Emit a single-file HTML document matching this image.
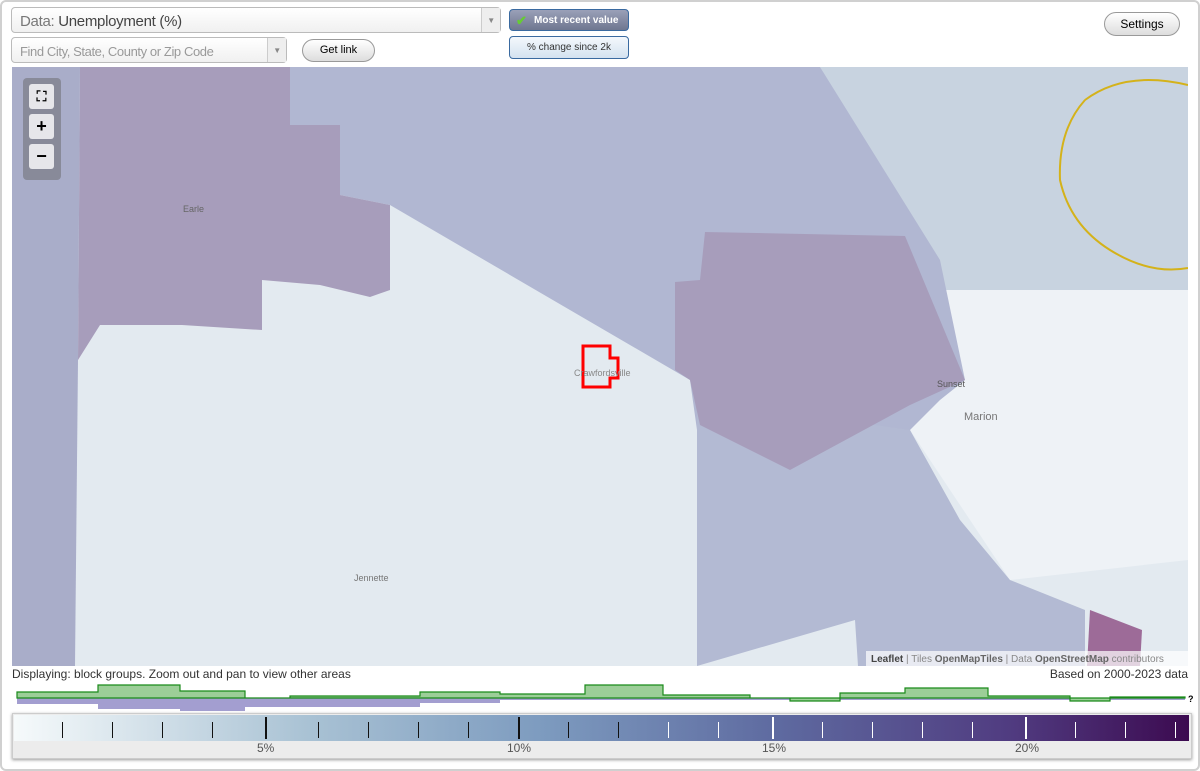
<!DOCTYPE html><html><head><style>
body{margin:0;width:1200px;height:771px;overflow:hidden;font-family:"Liberation Sans",sans-serif;background:#fff}
.frame{position:absolute;left:0;top:0;width:1196px;height:767px;border:2px solid #d0d0d0;border-radius:6px}
.sel{position:absolute;background:linear-gradient(#fff,#f0f0f0);border:1px solid #bbb;border-radius:4px;box-sizing:border-box;font-size:14px;color:#444}
.arrow{position:absolute;right:0;top:0;bottom:0;width:18px;border-left:1px solid #ccc;background:#eee;font-size:8px;color:#888;text-align:center}
.btn{position:absolute;border:1px solid #999;border-radius:12px;background:linear-gradient(#fff,#ddd);font-size:11px;text-align:center;box-sizing:border-box}
.zb{position:absolute;left:29px;width:25px;height:25px;background:#e6e6ea;border-radius:3px;text-align:center;font-weight:bold;font-size:18px;line-height:25px}
.tk{position:absolute;top:722px;width:1px;height:16px;background:#111}
.lb{position:absolute;top:741px;font-size:12px;color:#555}
</style></head><body>
<div class="frame"></div>
<div class="sel" style="left:11px;top:7px;width:490px;height:26px;padding:5px 8px;font-size:15px;letter-spacing:-0.3px"><span style="color:#777">Data:</span> Unemployment (%)<div class="arrow" style="line-height:26px">▼</div></div>
<div class="sel" style="left:11px;top:37px;width:276px;height:26px;padding:6px 8px;font-size:13px;color:#999;letter-spacing:-0.4px">Find City, State, County or Zip Code<div class="arrow" style="line-height:26px">▼</div></div>
<div class="btn" style="left:302px;top:39px;width:73px;height:23px;line-height:21px">Get link</div>
<div style="position:absolute;left:509px;top:9px;width:120px;height:22px;border:1px solid #3a6aa0;border-radius:4px;background:linear-gradient(#9aa0b8,#6f7790);color:#fff;font-size:10px;font-weight:bold;line-height:22px;box-sizing:border-box;padding-left:24px">Most recent value<span style="position:absolute;left:6px;color:#6c3;font-size:13px">✔</span></div>
<div style="position:absolute;left:509px;top:36px;width:120px;height:23px;border:1px solid #3a6aa0;border-radius:4px;background:linear-gradient(#f4f8fc,#d4e2f0);color:#333;font-size:10px;line-height:21px;text-align:center;box-sizing:border-box">% change since 2k</div>
<div class="btn" style="left:1104px;top:12px;width:76px;height:24px;line-height:22px;font-size:12px">Settings</div>

<svg style="position:absolute;left:12px;top:67px" width="1176" height="599" viewBox="12 67 1176 599">
<rect x="12" y="67" width="1176" height="599" fill="#e3eaf0"/>
<polygon points="820,67 1188,67 1188,290 940,290" fill="#c8d3e0"/>
<polygon points="940,290 1188,290 1188,560 1010,580 910,430" fill="#eef2f6"/>
<polygon points="12,67 80,67 78,360 75,666 12,666" fill="#a9adc9"/>
<polygon points="290,67 820,67 940,260 965,380 940,400 910,430 697,430 690,380 390,205 340,195 340,125 290,125" fill="#b1b7d2"/>
<polygon points="697,400 910,430 960,520 1010,580 1085,610 1085,666 858,666 855,620 697,666" fill="#b3bad3"/>
<polygon points="80,67 290,67 290,125 340,125 340,195 390,205 390,290 370,297 320,285 262,280 262,330 182,325 100,325 78,360" fill="#a79dbb"/>
<polygon points="705,232 905,236 965,380 910,405 790,470 700,425 690,380 675,370 675,282 700,280" fill="#a79dbb"/>
<polygon points="1090,610 1142,630 1140,666 1087,666" fill="#9d6b98"/>
<path d="M1085,100 Q1125,70 1188,85 M1188,268 Q1150,275 1110,250 Q1070,225 1060,180 Q1058,130 1085,100" fill="none" stroke="#d4b21a" stroke-width="2"/>
<polygon points="583,346 610,346 610,358 618,358 618,378 610,378 610,387 583,387" fill="none" stroke="#f00" stroke-width="3"/>
<text x="183" y="212" font-size="9" fill="#666" font-family="Liberation Sans">Earle</text>
<text x="574" y="376" font-size="9" fill="#888" font-family="Liberation Sans">Crawfordsville</text>
<text x="937" y="387" font-size="9" fill="#555" font-family="Liberation Sans">Sunset</text>
<text x="964" y="420" font-size="11" fill="#777" font-family="Liberation Sans">Marion</text>
<text x="354" y="581" font-size="9" fill="#777" font-family="Liberation Sans">Jennette</text>
<rect x="866" y="651" width="322" height="15" fill="rgba(255,255,255,0.7)"/>
<text x="871" y="662" font-size="10" fill="#888" font-family="Liberation Sans"><tspan fill="#444" font-weight="bold">Leaflet</tspan> | Tiles <tspan font-weight="bold" fill="#666">OpenMapTiles</tspan> | Data <tspan font-weight="bold" fill="#666">OpenStreetMap</tspan> contributors</text>
</svg>
<div style="position:absolute;left:23px;top:78px;width:38px;height:102px;background:#888a99;border-radius:4px"></div>
<div class="zb" style="top:84px;font-size:14px">⛶</div>
<div class="zb" style="top:114px">+</div>
<div class="zb" style="top:144px">−</div>

<div style="position:absolute;left:12px;top:667px;font-size:12px;color:#333">Displaying: block groups. Zoom out and pan to view other areas</div>
<div style="position:absolute;right:12px;top:667px;font-size:12px;color:#333">Based on 2000-2023 data</div>
<svg style="position:absolute;left:0;top:680px" width="1200" height="32">
<path d="M17,18 H1185 V20 H500 V23 H420 V27 H245 V31 H180 V29 H98 V24 H17 Z" fill="#a39ed0"/>
<path d="M17,18 V12 H98 V5 H180 V11 H245 V18 H290 V16 H420 V12 H500 V14 H585 V5 H663 V15 H750 V18 H790 V21 H840 V13 H905 V8 H988 V16 H1070 V21 H1110 V17 H1185 V18 Z" fill="#9cce98" stroke="#1a8a1a" stroke-width="1.2"/>
<text x="1188" y="22" font-size="9" font-weight="bold" font-family="Liberation Sans">?</text>
</svg>
<div style="position:absolute;left:12px;top:713px;width:1178px;height:44px;background:#ececec;border:1px solid #ccc;box-shadow:0 1px 3px #999"></div>
<div style="position:absolute;left:14px;top:715px;width:1175px;height:26px;background:linear-gradient(90deg,#f6fafb,#a9c2d4 25%,#7d9bbf 45%,#5e6aa0 65%,#503b80 85%,#3c0a50)"></div>
<div class="tk" style="left:62px"></div><div class="tk" style="left:112px"></div><div class="tk" style="left:162px"></div><div class="tk" style="left:212px"></div><div class="tk" style="left:265px;top:717px;height:22px;width:2px"></div><div class="tk" style="left:318px"></div><div class="tk" style="left:368px"></div><div class="tk" style="left:418px"></div><div class="tk" style="left:468px"></div><div class="tk" style="left:518px;top:717px;height:22px;width:2px"></div><div class="tk" style="left:568px"></div><div class="tk" style="left:618px"></div><div class="tk" style="left:668px;background:#fff"></div><div class="tk" style="left:718px;background:#fff"></div><div class="tk" style="left:772px;top:717px;height:22px;width:2px;background:#fff"></div><div class="tk" style="left:822px;background:#fff"></div><div class="tk" style="left:872px;background:#fff"></div><div class="tk" style="left:922px;background:#fff"></div><div class="tk" style="left:972px;background:#fff"></div><div class="tk" style="left:1025px;top:717px;height:22px;width:2px;background:#fff"></div><div class="tk" style="left:1075px;background:#fff"></div><div class="tk" style="left:1125px;background:#fff"></div><div class="tk" style="left:1175px;background:#fff"></div>
<div class="lb" style="left:257px">5%</div><div class="lb" style="left:507px">10%</div><div class="lb" style="left:762px">15%</div><div class="lb" style="left:1015px">20%</div>
</body></html>
